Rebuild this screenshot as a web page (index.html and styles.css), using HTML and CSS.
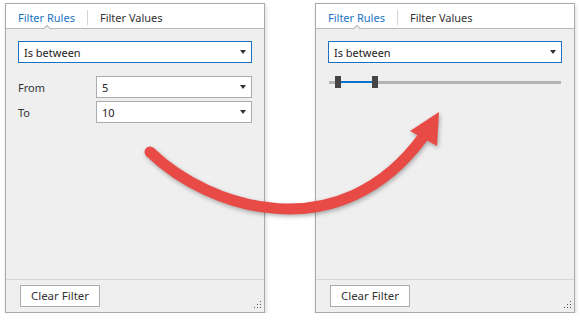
FILE: index.html
```html
<!DOCTYPE html>
<html>
<head>
    <title>Filter Rules</title>
    <link rel="stylesheet" href="styles.css">
</head>
<body>
    <div class="stage">
        <!-- before: two combo boxes -->
        <div class="panel">
            <div class="tabs">
                <span class="tab active">Filter Rules</span>
                <span class="tab-sep"></span>
                <span class="tab">Filter Values</span>
                <span class="notch"></span>
            </div>
            <div class="content">
                <div class="combo focused"><span>Is between</span><i class="caret"></i></div>
                <div class="fields">
                    <div class="field-row">
                        <label>From</label>
                        <div class="combo"><span>5</span><i class="caret"></i></div>
                    </div>
                    <div class="field-row">
                        <label>To</label>
                        <div class="combo"><span>10</span><i class="caret"></i></div>
                    </div>
                </div>
            </div>
            <div class="footer">
                <button class="btn">Clear Filter</button>
            </div>
            <svg class="grip" width="8" height="8" viewBox="0 0 8 8">
                <rect x="6" y="0" width="1" height="1"/>
                <rect x="3" y="3" width="1" height="1"/><rect x="6" y="3" width="1" height="1"/>
                <rect x="0" y="6" width="1" height="1"/><rect x="3" y="6" width="1" height="1"/><rect x="6" y="6" width="1" height="1"/>
            </svg>
        </div>

        <!-- after: range slider -->
        <div class="panel">
            <div class="tabs">
                <span class="tab active">Filter Rules</span>
                <span class="tab-sep"></span>
                <span class="tab">Filter Values</span>
                <span class="notch"></span>
            </div>
            <div class="content">
                <div class="combo focused"><span>Is between</span><i class="caret"></i></div>
                <div class="slider">
                    <span class="track"></span>
                    <span class="thumb"></span>
                    <span class="track range"></span>
                    <span class="thumb"></span>
                    <span class="track rest"></span>
                </div>
            </div>
            <div class="footer">
                <button class="btn">Clear Filter</button>
            </div>
            <svg class="grip" width="8" height="8" viewBox="0 0 8 8">
                <rect x="6" y="0" width="1" height="1"/>
                <rect x="3" y="3" width="1" height="1"/><rect x="6" y="3" width="1" height="1"/>
                <rect x="0" y="6" width="1" height="1"/><rect x="3" y="6" width="1" height="1"/><rect x="6" y="6" width="1" height="1"/>
            </svg>
        </div>
    </div>

    <svg class="arrow" width="580" height="320" viewBox="0 0 580 320">
        <path d="M150 152 C 210 210 340 250 423 137" fill="none" stroke="#e84a45" stroke-width="11" stroke-linecap="round"/>
        <polygon points="439,112 410,131 437,146" fill="#e84a45"/>
    </svg>
</body>
</html>
```

FILE: styles.css
```css
body {
    background-color: #ffffff;
    font-family: 'Segoe UI', 'Noto Sans', sans-serif;
    font-size: 11px;
    color: #333333;
    margin: 0;
    padding: 0;
}

.stage {
    display: flex;
    gap: 50px;
    padding: 3px 0 0 5px;
}

.panel {
    position: relative;
    width: 260px;
    height: 310px;
    box-sizing: border-box;
    display: flex;
    flex-direction: column;
    background-color: #efefef;
    border: 1px solid #a9a9a9;
    box-shadow: 1px 2px 4px rgba(0, 0, 0, 0.15);
}

.tabs {
    position: relative;
    display: flex;
    align-items: center;
    gap: 12px;
    height: 24px;
    box-sizing: border-box;
    padding: 2px 0 0 12px;
    background-color: #ffffff;
    border-bottom: 1px solid #b9b9b9;
    height: 25px;
}

.tab {
    color: #333333;
}

.tab.active {
    color: #1a73c2;
}

.tab-sep {
    width: 1px;
    height: 15px;
    background-color: #d4d4d4;
}

.notch {
    position: absolute;
    left: 38px;
    bottom: -4px;
    width: 5px;
    height: 5px;
    background-color: #efefef;
    border-top: 1px solid #b9b9b9;
    border-left: 1px solid #b9b9b9;
    transform: rotate(45deg);
}

.content {
    flex: 1;
    padding: 12px;
}

.combo {
    display: flex;
    align-items: center;
    justify-content: space-between;
    height: 22px;
    box-sizing: border-box;
    padding: 0 5px;
    background-color: #ffffff;
    border: 1px solid #ababab;
    color: #222222;
}

.combo.focused {
    border-color: #1a73c2;
}

.caret {
    width: 0;
    height: 0;
    border-left: 3.5px solid transparent;
    border-right: 3.5px solid transparent;
    border-top: 4px solid #333333;
}

.fields {
    display: flex;
    flex-direction: column;
    gap: 3px;
    margin-top: 13px;
}

.field-row {
    display: flex;
    align-items: center;
}

.field-row label {
    width: 78px;
    color: #333333;
}

.field-row .combo {
    flex: 1;
}

.slider {
    display: flex;
    align-items: center;
    height: 12px;
    margin-top: 13px;
    padding: 0 1px;
}

.track {
    width: 6px;
    height: 3px;
    background-color: #b4b4b4;
}

.track.range {
    width: 31px;
    height: 2px;
    background-color: #0a72c8;
}

.track.rest {
    flex: 1;
}

.thumb {
    width: 6px;
    height: 12px;
    background-color: #444444;
}

.footer {
    display: flex;
    padding: 5px 14px;
    border-top: 1px solid #d6d6d6;
}

.btn {
    width: 80px;
    height: 22px;
    padding: 0 0 1px;
    font-family: inherit;
    font-size: 11.5px;
    color: #333333;
    background-color: #ffffff;
    border: 1px solid #adadad;
}

.grip {
    position: absolute;
    right: 2px;
    bottom: 3px;
    fill: #555555;
}

.arrow {
    position: absolute;
    top: 0;
    left: 0;
    pointer-events: none;
    filter: drop-shadow(1px 2px 2px rgba(0, 0, 0, 0.3));
}
```
